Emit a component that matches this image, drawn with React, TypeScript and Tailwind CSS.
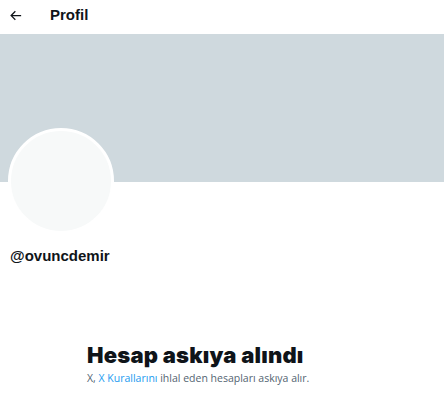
export default function App() {
  return (
    <div className="w-[444px] h-[401px] bg-white overflow-hidden text-[#0f1419] font-['Liberation_Sans',Arial,sans-serif]">
      {/* header */}
      <div className="h-[34px] flex items-center">
        <div className="w-[50px] flex pl-[8px] -mt-[3px]">
          <svg viewBox="0 0 24 24" className="w-[15px] h-[15px] fill-[#0f1419]">
            <path d="M7.414 13l5.043 5.04-1.414 1.42L3.586 12l7.457-7.46 1.414 1.42L7.414 11H21v2H7.414z" />
          </svg>
        </div>
        <span className="text-[15px] font-bold leading-5 -mt-[4px]">Profil</span>
      </div>

      {/* banner */}
      <div className="h-[148px] bg-[#cfd9de]" />

      {/* avatar + name */}
      <div className="pl-[8px]">
        <div className="w-[106px] h-[106px] -mt-[54px] rounded-full border-[3px] border-white bg-[#f7f9f9]" />
        <div className="mt-[12px] pl-[2px] text-[15px] leading-5 font-bold">@ovuncdemir</div>
      </div>

      {/* suspended notice */}
      <div className="w-[270px] mx-auto mt-[75px]">
        <h2 className="text-[22px] leading-7 font-black font-['Inter',sans-serif] tracking-[0.2px]">Hesap askıya alındı</h2>
        <p className="mt-[1px] text-[10.5px] leading-4 text-[#536471] font-['Open_Sans',sans-serif]">
          X, <span className="text-[#1d9bf0]">X Kurallarını</span> ihlal eden hesapları askıya alır.
        </p>
      </div>
    </div>
  );
}
